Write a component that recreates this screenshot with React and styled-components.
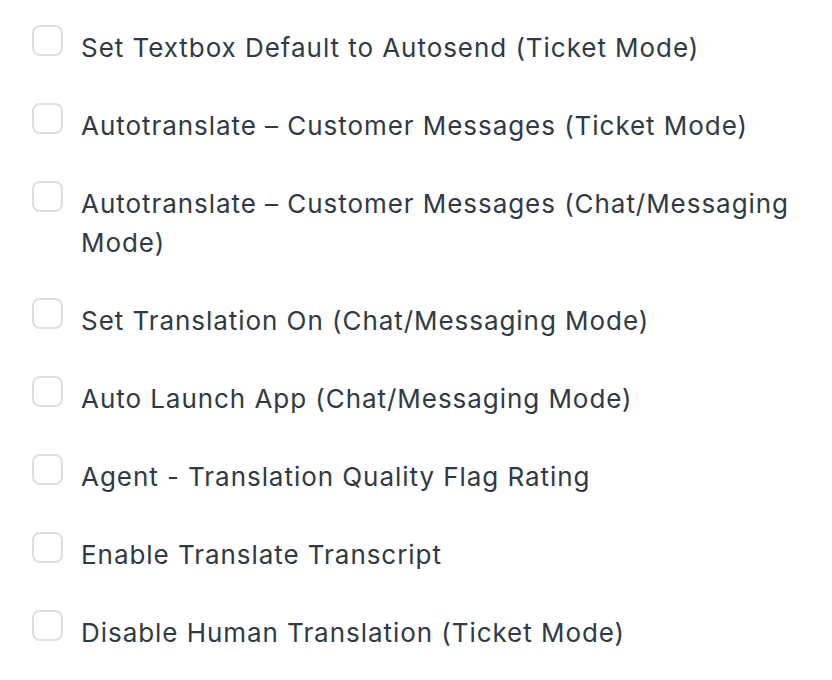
import React from 'react'
import styled, { createGlobalStyle } from 'styled-components'

const GlobalStyle = createGlobalStyle`
    body {
        margin: 0;
        background: #ffffff;
        font-family: Inter, "Noto Sans", "Liberation Sans", sans-serif;
    }
`

const options = [
    'Set Textbox Default to Autosend (Ticket Mode)',
    'Autotranslate \u2013 Customer Messages (Ticket Mode)',
    'Autotranslate \u2013 Customer Messages (Chat/Messaging Mode)',
    'Set Translation On (Chat/Messaging Mode)',
    'Auto Launch App (Chat/Messaging Mode)',
    'Agent - Translation Quality Flag Rating',
    'Enable Translate Transcript',
    'Disable Human Translation (Ticket Mode)',
]

const SettingsList = styled.div`
    display: flex;
    flex-direction: column;
    gap: 36px;
    padding: 25px 32px 0 32px;
`

const OptionRow = styled.label`
    display: flex;
    align-items: flex-start;
    gap: 18px;
    cursor: pointer;
`

const Box = styled.span`
    flex: 0 0 auto;
    width: 27px;
    height: 27px;
    border: 2px solid #dbe0e5;
    border-radius: 8px;
    background: #fff;
`

const OptionText = styled.span`
    font-size: 26px;
    line-height: 39px;
    color: #2f3a45;
    margin-top: 3px;
    letter-spacing: 0.95px;
`

const App = () => (
    <>
        <GlobalStyle />
        <SettingsList>
            {options.map(text => (
                <OptionRow key={text}>
                    <Box />
                    <OptionText>{text}</OptionText>
                </OptionRow>
            ))}
        </SettingsList>
    </>
)

export default App
